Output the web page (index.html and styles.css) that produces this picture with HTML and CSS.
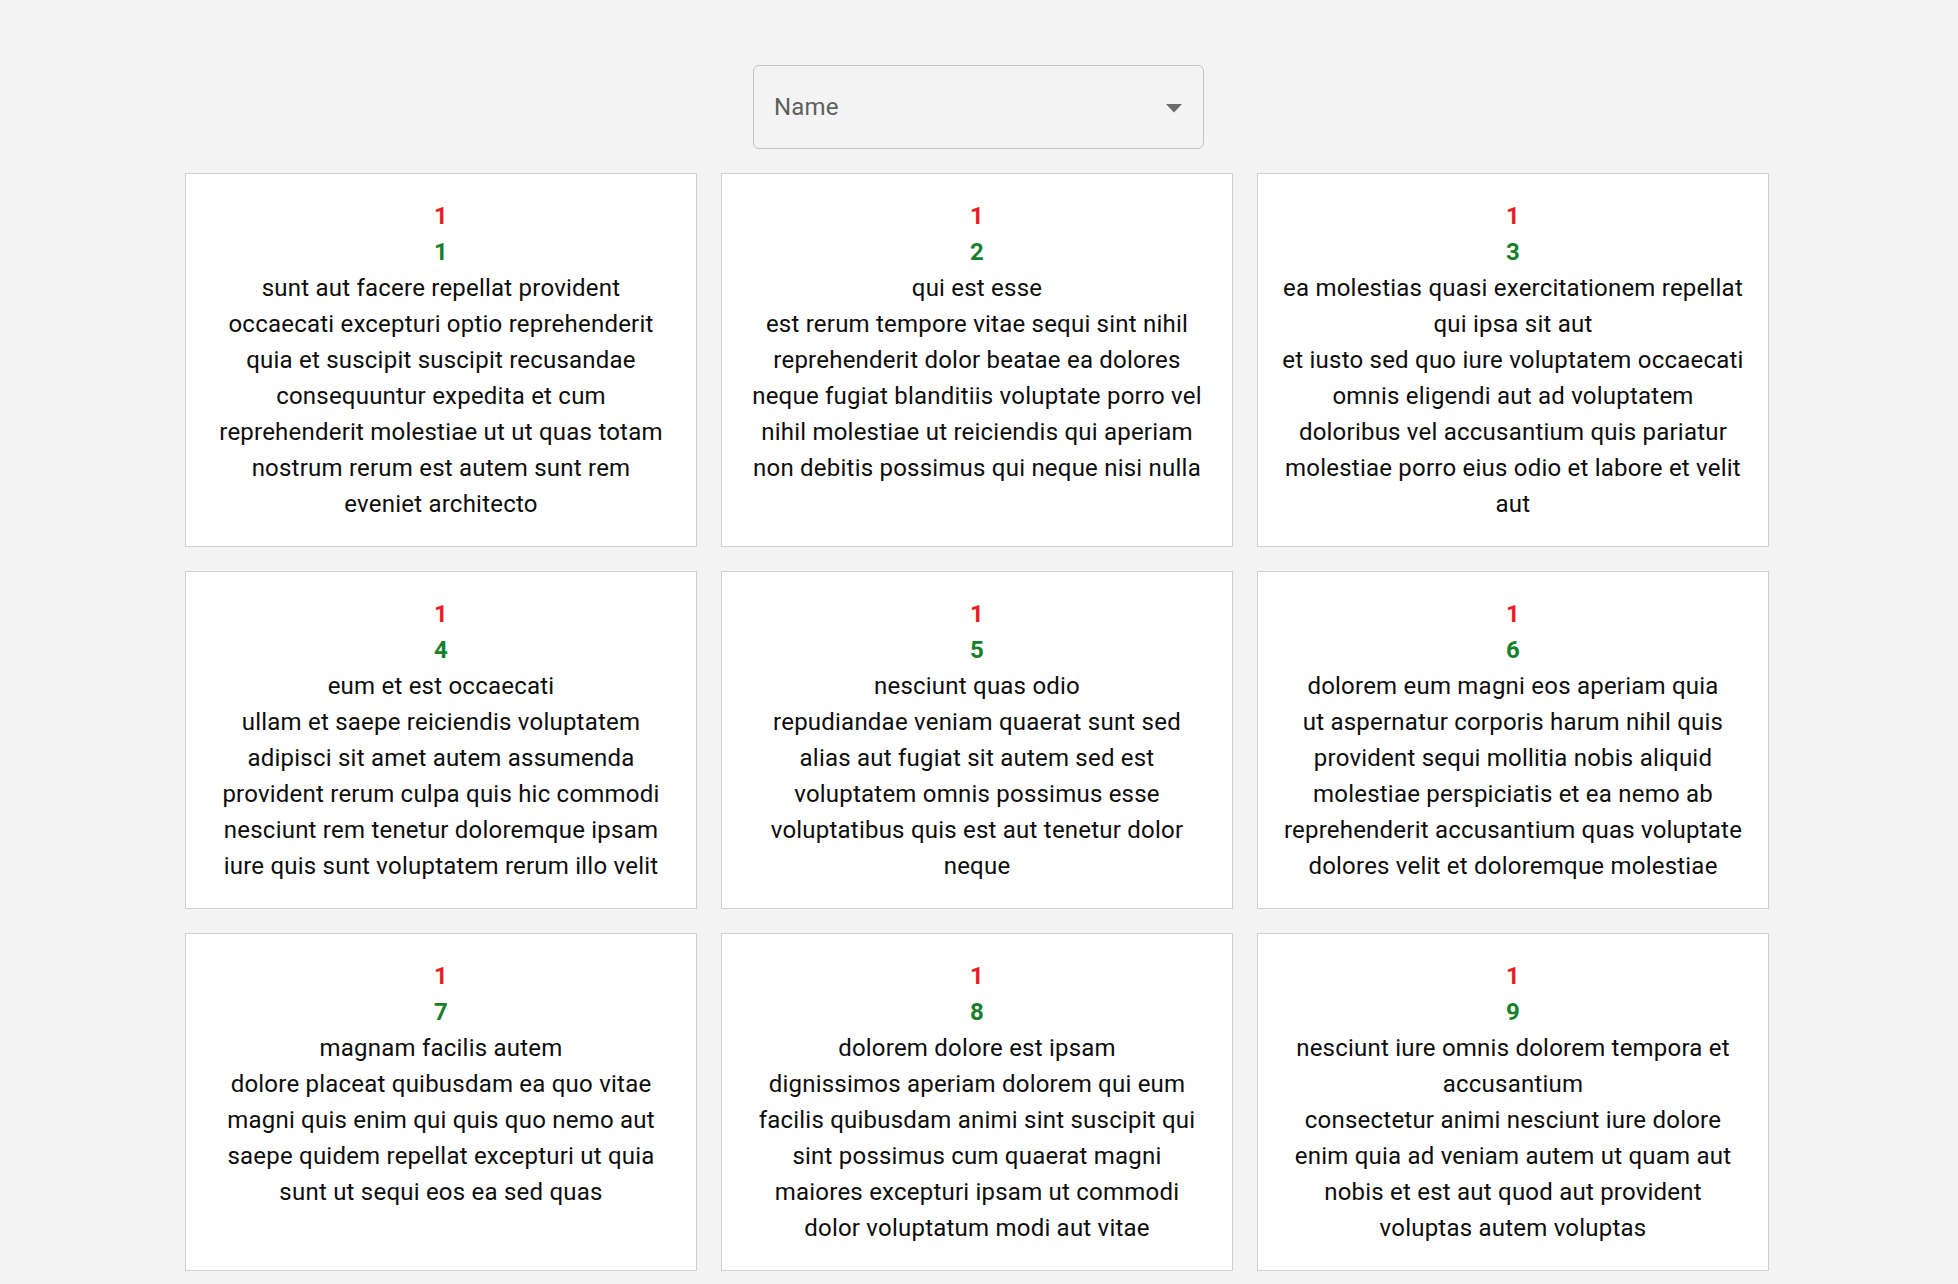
FILE: index.html
```html
<!DOCTYPE html>
<html lang="en">
<head>
<meta charset="utf-8">
<title>Posts</title>
<link rel="stylesheet" href="styles.css">
</head>
<body>
<main class="page">
  <div class="select">
    <span class="select-label">Name</span>
    <svg class="select-arrow" width="16" height="9" viewBox="0 0 16 9"><path d="M0 0 L16 0 L8 8.5 Z" fill="#6b6b6b"/></svg>
  </div>
  <section class="grid">
    <article class="card">
      <div class="uid">1</div>
      <div class="pid">1</div>
      <div class="title">sunt aut facere repellat provident occaecati excepturi optio reprehenderit</div>
      <div class="body">quia et suscipit suscipit recusandae consequuntur expedita et cum reprehenderit molestiae ut ut quas totam nostrum rerum est autem sunt rem eveniet architecto</div>
    </article>
    <article class="card">
      <div class="uid">1</div>
      <div class="pid">2</div>
      <div class="title">qui est esse</div>
      <div class="body">est rerum tempore vitae sequi sint nihil reprehenderit dolor beatae ea dolores neque fugiat blanditiis voluptate porro vel nihil molestiae ut reiciendis qui aperiam non debitis possimus qui neque nisi nulla</div>
    </article>
    <article class="card">
      <div class="uid">1</div>
      <div class="pid">3</div>
      <div class="title">ea molestias quasi exercitationem repellat qui ipsa sit aut</div>
      <div class="body">et iusto sed quo iure voluptatem occaecati omnis eligendi aut ad voluptatem doloribus vel accusantium quis pariatur molestiae porro eius odio et labore et velit aut</div>
    </article>
    <article class="card">
      <div class="uid">1</div>
      <div class="pid">4</div>
      <div class="title">eum et est occaecati</div>
      <div class="body">ullam et saepe reiciendis voluptatem adipisci sit amet autem assumenda provident rerum culpa quis hic commodi nesciunt rem tenetur doloremque ipsam iure quis sunt voluptatem rerum illo velit</div>
    </article>
    <article class="card">
      <div class="uid">1</div>
      <div class="pid">5</div>
      <div class="title">nesciunt quas odio</div>
      <div class="body">repudiandae veniam quaerat sunt sed alias aut fugiat sit autem sed est voluptatem omnis possimus esse voluptatibus quis est aut tenetur dolor neque</div>
    </article>
    <article class="card">
      <div class="uid">1</div>
      <div class="pid">6</div>
      <div class="title">dolorem eum magni eos aperiam quia</div>
      <div class="body">ut aspernatur corporis harum nihil quis provident sequi mollitia nobis aliquid molestiae perspiciatis et ea nemo ab reprehenderit accusantium quas voluptate dolores velit et doloremque molestiae</div>
    </article>
    <article class="card">
      <div class="uid">1</div>
      <div class="pid">7</div>
      <div class="title">magnam facilis autem</div>
      <div class="body">dolore placeat quibusdam ea quo vitae magni quis enim qui quis quo nemo aut saepe quidem repellat excepturi ut quia sunt ut sequi eos ea sed quas</div>
    </article>
    <article class="card">
      <div class="uid">1</div>
      <div class="pid">8</div>
      <div class="title">dolorem dolore est ipsam</div>
      <div class="body">dignissimos aperiam dolorem qui eum facilis quibusdam animi sint suscipit qui sint possimus cum quaerat magni maiores excepturi ipsam ut commodi dolor voluptatum modi aut vitae</div>
    </article>
    <article class="card">
      <div class="uid">1</div>
      <div class="pid">9</div>
      <div class="title">nesciunt iure omnis dolorem tempora et accusantium</div>
      <div class="body">consectetur animi nesciunt iure dolore enim quia ad veniam autem ut quam aut nobis et est aut quod aut provident voluptas autem voluptas</div>
    </article>
  </section>
</main>
</body>
</html>
```
FILE: styles.css
```css
html, body {
  margin: 0;
  padding: 0;
}
body {
  background: #f4f4f4;
  font-family: Roboto, "Liberation Sans", Arial, sans-serif;
  color: #0d0d0d;
  overflow: hidden;
}
.page {
  display: flex;
  flex-direction: column;
  align-items: center;
  padding: 65px 4px 0 0;
}
.select {
  box-sizing: border-box;
  width: 451px;
  height: 84px;
  margin-left: 3px;
  border: 1px solid #c4c4c4;
  border-radius: 6px;
  display: flex;
  align-items: center;
  justify-content: space-between;
  padding: 0 21px 0 20px;
  margin-bottom: 24px;
}
.select-label {
  font-size: 24px;
  color: #5f5f5f;
  letter-spacing: 0.2px;
}
.select-arrow {
  display: block;
  margin-top: 2px;
}
.grid {
  display: grid;
  grid-template-columns: repeat(3, 512px);
  gap: 24px;
}
.card {
  box-sizing: border-box;
  background: #fff;
  border: 1px solid #cfcfcf;
  padding: 24px 24px 24px;
  text-align: center;
  font-size: 24px;
  line-height: 36px;
  letter-spacing: 0.22px;
}
.uid {
  color: #ec1c24;
  font-weight: 700;
}
.pid {
  color: #17802a;
  font-weight: 700;
}
```
